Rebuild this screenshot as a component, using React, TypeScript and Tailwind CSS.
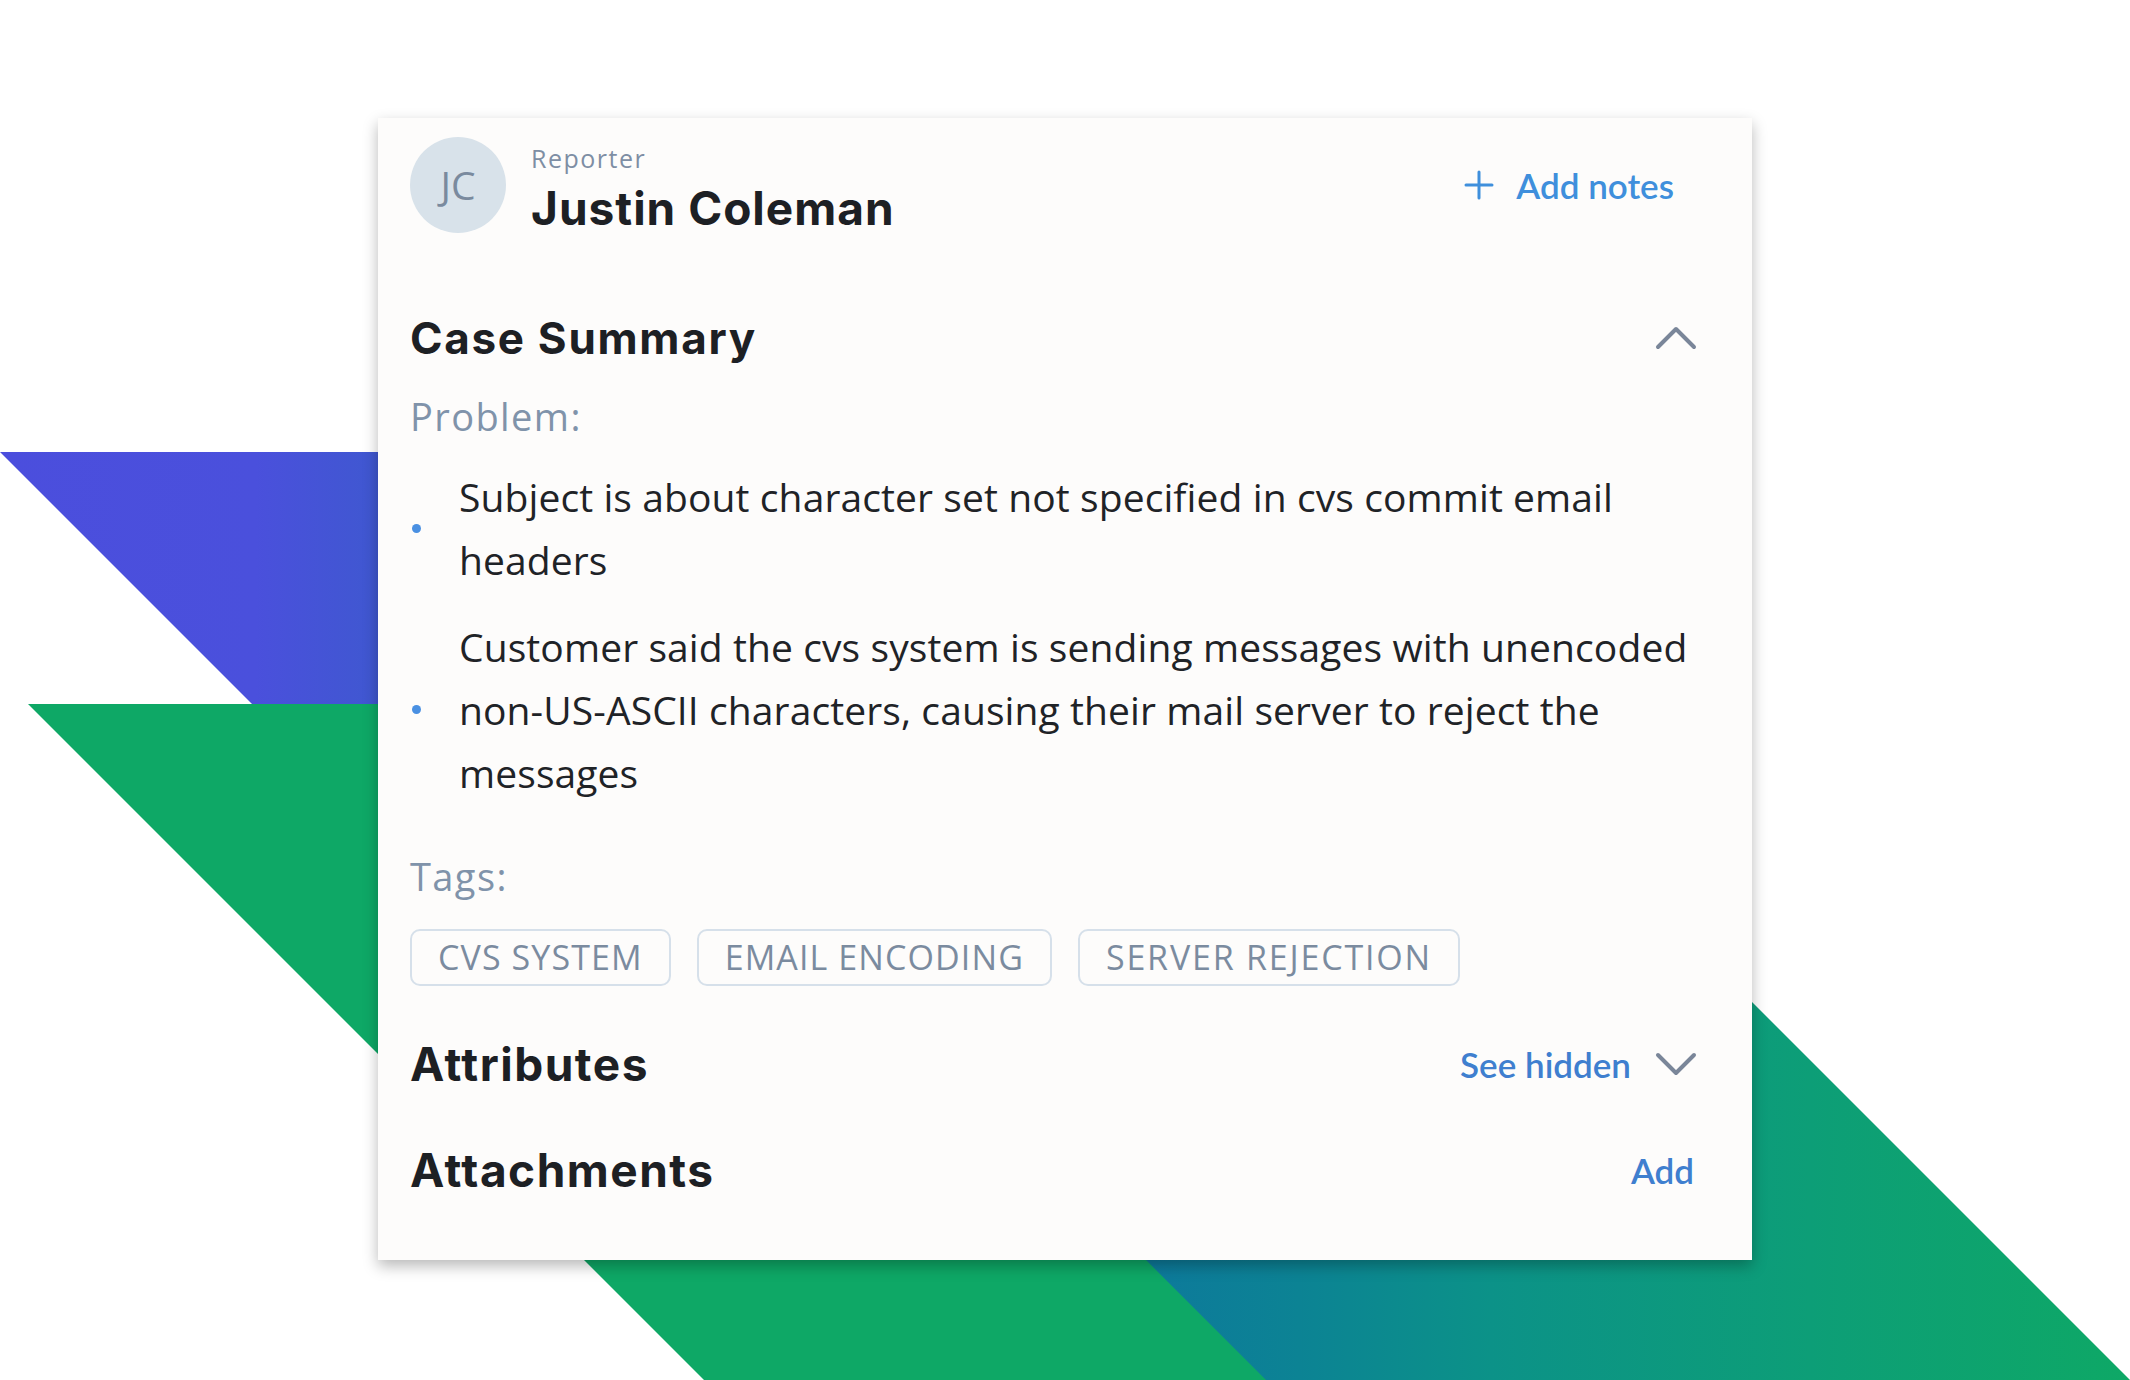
import React from "react";

const Chevron = ({ up }: { up?: boolean }) => (
  <svg width="42" height="24" viewBox="0 0 42 24" fill="none" className="shrink-0">
    {up ? (
      <polyline points="3,21 21,3 39,21" stroke="#7a8699" strokeWidth="4" strokeLinecap="round" strokeLinejoin="round" />
    ) : (
      <polyline points="3,3 21,21 39,3" stroke="#7a8699" strokeWidth="4" strokeLinecap="round" strokeLinejoin="round" />
    )}
  </svg>
);

const Background = () => (
  <svg className="absolute inset-0" width="2130" height="1380" viewBox="0 0 2130 1380">
    <defs>
      <linearGradient id="bg1" gradientUnits="userSpaceOnUse" x1="0" y1="0" x2="2130" y2="0">
        <stop offset="0" stopColor="#4b4edd" />
        <stop offset="0.12" stopColor="#4a50dc" />
        <stop offset="0.18" stopColor="#3f58d0" />
        <stop offset="0.54" stopColor="#0d7a9b" />
        <stop offset="0.61" stopColor="#0c8394" />
        <stop offset="0.7" stopColor="#0c9288" />
        <stop offset="0.85" stopColor="#0d9e77" />
        <stop offset="1" stopColor="#0ea866" />
      </linearGradient>
    </defs>
    <polygon points="0,452 1202,452 2130,1380 928,1380" fill="url(#bg1)" />
    <polygon points="28,704 590,704 1266,1380 704,1380" fill="#0ea866" />
  </svg>
);

const Tag = ({ children, wide }: { children: React.ReactNode; wide?: boolean }) => (
  <div
    className={`h-[57px] px-[26px] flex items-center rounded-[10px] border-2 border-[#d6e0ea] font-['Open_Sans',sans-serif] text-[34px] text-[#7b8b9f] uppercase ${
      wide ? "tracking-[1.8px]" : "tracking-[1.1px]"
    }`}
  >
    {children}
  </div>
);

export default function App() {
  const heading = "font-['Inter',sans-serif] font-bold text-[#1d2024]";
  const link = "font-['Lato',sans-serif] font-semibold";
  const os = "font-['Open_Sans',sans-serif]";
  return (
    <div className="relative w-[2130px] h-[1380px] bg-white overflow-hidden">
      <Background />
      <div className="relative pt-[118px] pl-[378px]">
        <div className="w-[1374px] h-[1142px] bg-[#fdfcfb] shadow-[0_6px_14px_rgba(0,0,0,0.28)] pl-[32px] pr-[55px] pt-[19px] flex flex-col">
          {/* Header */}
          <div className="h-[96px] flex items-center justify-between">
            <div className="flex items-center">
              <div className={`w-[96px] h-[96px] rounded-full bg-[#d8e2ea] flex items-center justify-center ${os} text-[39px] text-[#7a8a9e]`}>
                JC
              </div>
              <div className="ml-[25px] mt-[8px] flex flex-col">
                <span className={`${os} text-[25px] leading-[30px] tracking-[1.5px] text-[#7e8ea4]`}>Reporter</span>
                <span className={`${heading} mt-[8px] text-[46px] leading-[54px] tracking-[1px]`}>Justin Coleman</span>
              </div>
            </div>
            <div className="flex items-center mr-[23px] text-[#3f8fdc]">
              <svg width="30" height="30" viewBox="0 0 30 30" fill="none">
                <path d="M15 2V28M2 15H28" stroke="#3f8fdc" strokeWidth="3" strokeLinecap="round" />
              </svg>
              <span className={`${link} ml-[22px] text-[35px]`}>Add notes</span>
            </div>
          </div>

          {/* Case summary */}
          <div className="mt-[75px] h-[60px] flex items-center justify-between">
            <span className={`${heading} text-[44px] tracking-[1.7px]`}>Case Summary</span>
            <Chevron up />
          </div>

          <div className={`mt-[23px] h-[50px] flex items-center ${os} text-[38px] tracking-[1.4px] text-[#8093aa]`}>
            Problem:
          </div>

          <ul className={`${os} mt-[24px] mr-[-20px] flex flex-col gap-[24px] text-[39px] leading-[63px] tracking-[0.1px] text-[#1f2327]`}>
            <li className="flex items-center">
              <span className="ml-[2px] w-[9px] h-[9px] rounded-full bg-[#4a90e2] shrink-0" />
              <span className="ml-[38px]">Subject is about character set not specified in cvs commit email headers</span>
            </li>
            <li className="flex items-center">
              <span className="ml-[2px] w-[9px] h-[9px] rounded-full bg-[#4a90e2] shrink-0" />
              <span className="ml-[38px]">
                Customer said the cvs system is sending messages with unencoded non-US-ASCII characters, causing their mail server to reject the messages
              </span>
            </li>
          </ul>

          <div className={`mt-[47px] h-[50px] flex items-center ${os} text-[38px] tracking-[1.4px] text-[#8093aa]`}>
            Tags:
          </div>

          <div className="mt-[28px] flex gap-[26px]">
            <Tag>CVS System</Tag>
            <Tag>Email Encoding</Tag>
            <Tag wide>Server Rejection</Tag>
          </div>

          <div className="mt-[48px] h-[60px] flex items-center justify-between">
            <span className={`${heading} text-[46px] tracking-[1.5px]`}>Attributes</span>
            <div className="flex items-center">
              <span className={`${link} text-[35px] text-[#3f7fcf]`}>See hidden</span>
              <span className="ml-[24px]">
                <Chevron />
              </span>
            </div>
          </div>

          <div className="mt-[46px] h-[60px] flex items-center justify-between">
            <span className={`${heading} text-[46px] tracking-[1.5px]`}>Attachments</span>
            <span className={`${link} text-[35px] text-[#3f7fcf] mr-[3px]`}>Add</span>
          </div>
        </div>
      </div>
    </div>
  );
}
